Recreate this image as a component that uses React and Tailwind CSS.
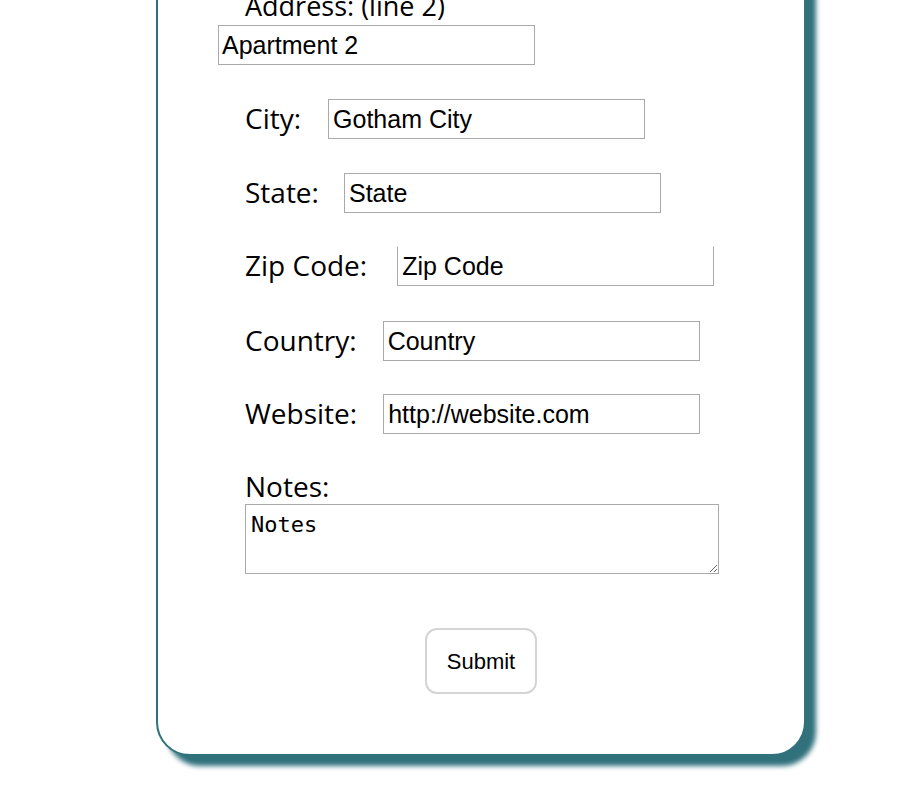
import { useState } from 'react';

const labelFont = { fontFamily: '"Open Sans", "Noto Sans", sans-serif' };

function Field({ label, value, onChange, className = '', inputClass = '' }) {
  return (
    <div className={`flex items-center ml-[27px] h-[40px] ${className}`}>
      <label className="text-[28px] leading-[32px] pb-[3px] text-black" style={labelFont}>{label}</label>
      <input
        type="text"
        value={value}
        onChange={(e) => onChange(e.target.value)}
        className={`w-[317px] h-[40px] px-[4px] border border-[#a9a9a9] bg-white text-[25px] text-black font-['Liberation_Sans',Arial,sans-serif] outline-none ${inputClass}`}
      />
    </div>
  );
}

export default function App() {
  const [address2, setAddress2] = useState('Apartment 2');
  const [city, setCity] = useState('Gotham City');
  const [state, setState] = useState('State');
  const [zip, setZip] = useState('Zip Code');
  const [country, setCountry] = useState('Country');
  const [website, setWebsite] = useState('http://website.com');
  const [notes, setNotes] = useState('Notes');

  return (
    <div className="min-h-screen bg-white overflow-hidden">
      <div className="ml-[156px] w-[650px] -mt-[70px] border-2 border-[#31717c] rounded-[34px] shadow-[10px_10px_5px_#31717c] bg-white pt-[58px] pb-[60px] pl-[60px]">
        <form onSubmit={(e) => e.preventDefault()} className="flex flex-col">
          <label className="ml-[27px] h-[32px] text-[27px] leading-[32px] text-black" style={labelFont}>
            Address: (line 2)
          </label>
          <input
            type="text"
            value={address2}
            onChange={(e) => setAddress2(e.target.value)}
            className="mt-[3px] w-[317px] h-[40px] px-[3px] border border-[#a9a9a9] bg-white text-[25px] text-black font-['Liberation_Sans',Arial,sans-serif] outline-none"
          />

          <Field label="City:" value={city} onChange={setCity} className="mt-[34px] gap-[27px]" />
          <Field label="State:" value={state} onChange={setState} className="mt-[34px] gap-[25px]" />
          <Field
            label="Zip Code:"
            value={zip}
            onChange={setZip}
            className="mt-[33px] gap-[30px]"
            inputClass="border-t-transparent"
          />
          <Field label="Country:" value={country} onChange={setCountry} className="mt-[35px] gap-[26px]" />
          <Field label="Website:" value={website} onChange={setWebsite} className="mt-[33px] gap-[26px]" />

          <label className="ml-[27px] mt-[36px] h-[32px] text-[28px] leading-[32px] pb-[1px] text-black" style={labelFont}>
            Notes:
          </label>
          <textarea
            value={notes}
            onChange={(e) => setNotes(e.target.value)}
            className="ml-[27px] mt-[2px] w-[474px] h-[70px] px-[5px] pt-[7px] border border-[#a9a9a9] bg-white text-[22px] leading-[26px] text-black font-['DejaVu_Sans_Mono',monospace] outline-none"
          />

          <div className="flex justify-center mt-[54px] pr-[60px]">
            <button
              type="submit"
              className="w-[112px] h-[66px] border-2 border-[#d4d4d4] rounded-[12px] bg-white text-[22px] text-black font-['Liberation_Sans',Arial,sans-serif]"
            >
              Submit
            </button>
          </div>
        </form>
      </div>
    </div>
  );
}
